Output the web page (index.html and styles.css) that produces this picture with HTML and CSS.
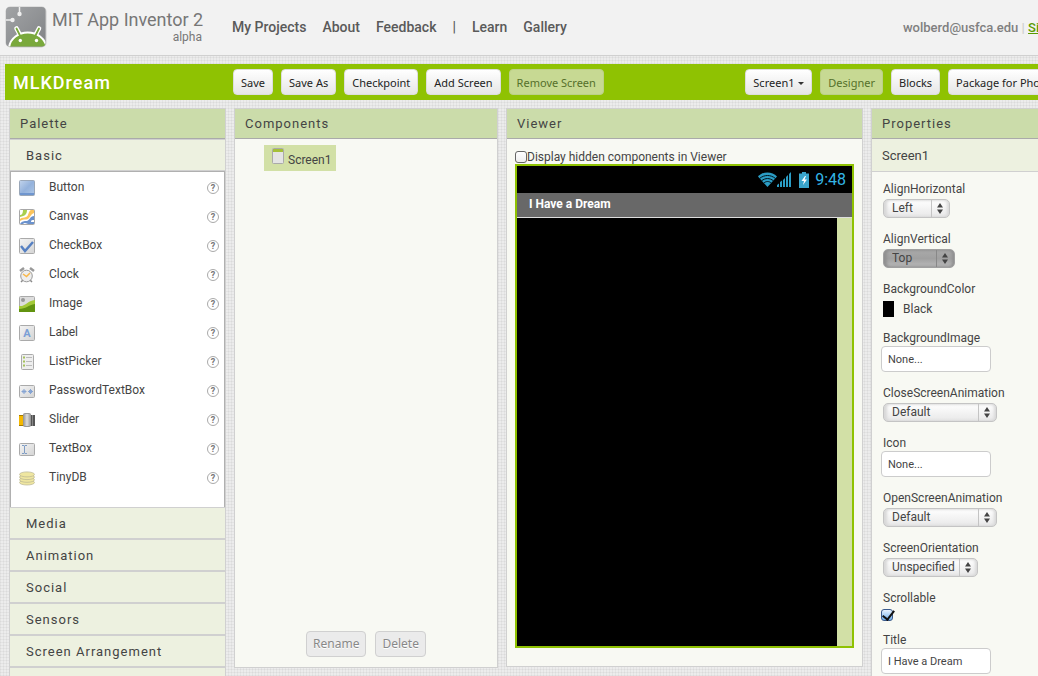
FILE: index.html
```html
<!DOCTYPE html>
<html lang="en">
<head>
    <meta charset="UTF-8">
    <meta name="viewport" content="width=device-width, initial-scale=1.0">
    <title>MIT App Inventor 2</title>
    <link rel="stylesheet" href="styles.css">
</head>
<body>
<div class="page">
    <header class="top-panel">
        <svg class="logo" viewBox="0 0 42 42" width="42" height="42">
            <defs>
                <linearGradient id="tile" x1="0" y1="0" x2="1" y2="1">
                    <stop offset="0" stop-color="#a2a4a6"/>
                    <stop offset="1" stop-color="#808285"/>
                </linearGradient>
                <clipPath id="tileClip"><rect x="1" y="1" width="39.500" height="39.500" rx="4"/></clipPath>
            </defs>
            <rect x="0.500" y="0.500" width="41" height="41" rx="5" fill="#c9c9c9"/>
            <g clip-path="url(#tileClip)">
                <rect x="0" y="0" width="42" height="42" fill="url(#tile)"/>
                <path d="M14.500 0V7M0 14H7" stroke="#eee" stroke-width="1.500"/>
                <circle cx="14.500" cy="8" r="2.200" fill="#eee"/>
                <circle cx="7.500" cy="14" r="2.200" fill="#eee"/>
                <path d="M11.500 22.500L15 29M34 22.500L30.500 29" stroke="#fff" stroke-width="4.600" stroke-linecap="round"/>
                <path d="M4 42C5 32 14 26.500 22.700 26.500C32 26.500 40 32 42 42Z" fill="#7aa93c" stroke="#fff" stroke-width="2"/>
                <path d="M11.500 22.500L15 29.500M34 22.500L30.500 29.500" stroke="#7aa93c" stroke-width="1.800" stroke-linecap="round"/>
                <circle cx="15.300" cy="34.500" r="1.700" fill="#fff"/>
                <circle cx="31.500" cy="34.500" r="1.700" fill="#fff"/>
            </g>
        </svg>
        <div class="brand">
            <div class="brand-name">MIT App Inventor 2</div>
            <div class="brand-tag">alpha</div>
        </div>
        <nav class="main-nav">
            <a href="#">My Projects</a>
            <a href="#">About</a>
            <a href="#">Feedback</a>
            <span>|</span>
            <a href="#">Learn</a>
            <a href="#">Gallery</a>
        </nav>
        <div class="account">wolberd@usfca.edu <span class="divider">|</span> <a href="#">Sign out</a></div>
    </header>

    <div class="toolbar">
        <h1>MLKDream</h1>
        <div class="button-group">
            <button>Save</button>
            <button>Save As</button>
            <button>Checkpoint</button>
            <button>Add Screen</button>
            <button disabled>Remove Screen</button>
        </div>
        <div class="button-group right">
            <button>Screen1 <span class="caret"></span></button>
            <button disabled>Designer</button>
            <button>Blocks</button>
            <button>Package for Phone</button>
        </div>
    </div>

    <main class="columns">
        <!-- Palette -->
        <section class="panel palette">
            <h2>Palette</h2>
            <h3>Basic</h3>
            <ul class="palette-items">
                <li>
                    <svg viewBox="0 0 16 16"><defs><linearGradient id="blue" x1="0" y1="0" x2="1" y2="1"><stop offset="0" stop-color="#c2d4ec"/><stop offset=".5" stop-color="#94b2dc"/><stop offset="1" stop-color="#afc8e8"/></linearGradient><linearGradient id="grey" x1="0" y1="0" x2="1" y2="1"><stop offset="0" stop-color="#f4f4f4"/><stop offset="1" stop-color="#d4d4d4"/></linearGradient></defs><rect x=".5" y=".5" width="15" height="15" rx="1" fill="url(#blue)" stroke="#9aa7b8"/><path d="M1 13h14v2H1z" fill="#6f96cf"/></svg>
                    <span>Button</span><a class="help" href="#">?</a>
                </li>
                <li>
                    <svg viewBox="0 0 16 16"><rect x=".5" y=".5" width="15" height="15" rx="1" fill="#fff" stroke="#a8a8a8"/><path d="M4 1h4c0 4-2 6-7 7V6c2 0 3-2 3-5z" fill="#a9cf4e"/><path d="M15 1h-3c-3 1-2 6-5 7-2 1-4 0-6 2v2c4-3 7 0 9-3 2-2 2-4 5-5z" fill="#fcc45c"/><path d="M15 7c-4 0-4 4-7 5-3 0-5 0-7 3h3c2-2 4 0 5 0h6v-2h-3c0-2 1-2 3-2z" fill="#6b92cd"/></svg>
                    <span>Canvas</span><a class="help" href="#">?</a>
                </li>
                <li>
                    <svg viewBox="0 0 16 16"><rect x=".5" y=".5" width="15" height="15" rx="1" fill="url(#grey)" stroke="#aaa"/><path d="M2 8l4 5 8-9" fill="none" stroke="#5680c2" stroke-width="2.500"/></svg>
                    <span>CheckBox</span><a class="help" href="#">?</a>
                </li>
                <li>
                    <svg viewBox="0 0 16 16"><path d="M1 4l4-3M11 1l4 3" stroke="#999" stroke-width="2.500"/><path d="M4 13l-2 2M11 13l2 2" stroke="#888" stroke-width="1.500"/><circle cx="7.500" cy="9" r="5.800" fill="#eee" stroke="#999"/><path d="M4 7l3.500 2.500L11 6" fill="none" stroke="#f9b749" stroke-width="1.500"/></svg>
                    <span>Clock</span><a class="help" href="#">?</a>
                </li>
                <li>
                    <svg viewBox="0 0 16 16"><rect x=".5" y=".5" width="15" height="15" rx="1" fill="#ddd" stroke="#aaa"/><circle cx="4" cy="4" r="2" fill="#999"/><path d="M0 10c6 1 8-5 16-6v12H0z" fill="#a4c938"/><path d="M0 13c7 0 9-4 16-5v8H0z" fill="#629310"/></svg>
                    <span>Image</span><a class="help" href="#">?</a>
                </li>
                <li>
                    <svg viewBox="0 0 16 16"><rect x=".5" y=".5" width="15" height="15" rx="1" fill="url(#grey)" stroke="#aaa"/><text class="letter-icon" x="8" y="12" text-anchor="middle">A</text></svg>
                    <span>Label</span><a class="help" href="#">?</a>
                </li>
                <li>
                    <svg viewBox="0 0 16 16"><rect x="2.500" y=".5" width="12" height="15" rx="1" fill="#eee" stroke="#aaa"/><path d="M4 3.500h2M4 7.500h2M4 11.500h2" stroke="#a4c15a" stroke-width="2"/><path d="M7 3.500h6M7 7.500h6M7 11.500h6" stroke="#bbb"/></svg>
                    <span>ListPicker</span><a class="help" href="#">?</a>
                </li>
                <li>
                    <svg viewBox="0 0 16 16"><rect x=".5" y="2.500" width="15" height="12" rx="1" fill="url(#grey)" stroke="#aaa"/><path d="M5 6v5M2.500 8.500h5M3.500 7l3 3M6.500 7l-3 3M11.500 6v5M9 8.500h5M10 7l3 3M13 7l-3 3" stroke="#86a4d3"/></svg>
                    <span>PasswordTextBox</span><a class="help" href="#">?</a>
                </li>
                <li>
                    <svg viewBox="0 0 16 16"><defs><linearGradient id="knob"><stop offset="0" stop-color="#999"/><stop offset=".5" stop-color="#ddd"/><stop offset="1" stop-color="#999"/></linearGradient></defs><path d="M0 3h5v11H0z" fill="#f5b800"/><path d="M0 3h5v1H0zM0 13h5v1H0z" fill="#a37a00"/><path d="M11 3h5v11h-5z" fill="#555"/><path d="M13 3h1v11h-1z" fill="#888"/><rect x="4.500" y="1.500" width="7" height="13" rx="1" fill="url(#knob)" stroke="#999"/></svg>
                    <span>Slider</span><a class="help" href="#">?</a>
                </li>
                <li>
                    <svg viewBox="0 0 16 16"><rect x=".5" y="2.500" width="15" height="12" rx="1" fill="url(#grey)" stroke="#aaa"/><path d="M3 4.500h2l.5.500.500-.5h2M5.500 5v7M3 12.500h2l.5-.5.500.500h2" fill="none" stroke="#7e9cc4"/></svg>
                    <span>TextBox</span><a class="help" href="#">?</a>
                </li>
                <li>
                    <svg viewBox="0 0 16 16"><g fill="#efe6a0" stroke="#b9b592" stroke-width=".7"><ellipse cx="8" cy="12.500" rx="7.500" ry="2.500"/><ellipse cx="8" cy="9.800" rx="7.500" ry="2.500"/><ellipse cx="8" cy="7.100" rx="7.500" ry="2.500"/><ellipse cx="8" cy="4.400" rx="7.500" ry="2.500"/></g></svg>
                    <span>TinyDB</span><a class="help" href="#">?</a>
                </li>
            </ul>
            <h3>Media</h3>
            <h3>Animation</h3>
            <h3>Social</h3>
            <h3>Sensors</h3>
            <h3>Screen Arrangement</h3>
            <div class="palette-end"></div>
        </section>

        <!-- Components tree -->
        <section class="panel components">
            <h2>Components</h2>
            <div class="tree">
                <a class="tree-item" href="#">
                    <svg viewBox="0 0 12 16" width="12" height="16"><rect x=".5" y=".5" width="11" height="15" rx="1" fill="#e4e4e4" stroke="#aaa"/><path d="M1 1h10v3H1z" fill="#a5c03a"/></svg>
                    <span>Screen1</span>
                </a>
            </div>
            <div class="tree-buttons">
                <button disabled>Rename</button>
                <button disabled>Delete</button>
            </div>
        </section>

        <!-- Viewer -->
        <section class="panel viewer">
            <h2>Viewer</h2>
            <div class="viewer-body">
                <label class="hidden-toggle"><input type="checkbox">Display hidden components in Viewer</label>
                <div class="phone">
                    <div class="status-bar">
                        <svg class="wifi" viewBox="0 0 19 15" width="19" height="15"><path d="M0 4.500C5-1 14-1 19 4.500L9.500 15z" fill="#2b9cc4"/><path d="M1.500 6.500c5-4 11-4 16 0M3.500 8.800c4-3 8-3 12 0M5.800 11c2.500-2 5-2 7.500 0" fill="none" stroke="#001018" stroke-width="1"/></svg>
                        <svg viewBox="0 0 15 15" width="15" height="15"><path d="M0 15v-2l2-1.500V15zM3 15v-5l2-1.500V15zM6 15V8l2-2v9zM9 15V5l2-2v12zM12 15V2l2-2v15z" fill="#2b9cc4"/></svg>
                        <svg class="battery" viewBox="0 0 10 16" width="10" height="16"><path d="M3 0h4v1.500h3V16H0V1.500h3z" fill="#3aa5cc"/><path d="M6 4L2.500 9H5l-1 4 4-5.500H5.500L7 4z" fill="#fff"/></svg>
                        <span>9:48</span>
                    </div>
                    <div class="title-bar">I Have a Dream</div>
                    <div class="screen"></div>
                </div>
            </div>
        </section>

        <!-- Properties -->
        <section class="panel properties">
            <h2>Properties</h2>
            <div class="subject">Screen1</div>
            <form class="props">
                <div class="prop">
                    <label for="alignH">AlignHorizontal</label>
                    <div class="picker w-left"><select id="alignH"><option>Left</option></select><svg viewBox="0 0 6 11"><path d="M3 0l3 4.500H0zM3 11l3-4.500H0z" fill="#444"/></svg></div>
                </div>
                <div class="prop">
                    <label for="alignV">AlignVertical</label>
                    <div class="picker w-top dark"><select id="alignV"><option>Top</option></select><svg viewBox="0 0 6 11"><path d="M3 0l3 4.500H0zM3 11l3-4.500H0z" fill="#444"/></svg></div>
                </div>
                <div class="prop">
                    <span class="prop-name">BackgroundColor</span>
                    <div class="color"><span class="swatch"></span>Black</div>
                </div>
                <div class="prop">
                    <label for="bgImage">BackgroundImage</label>
                    <input class="field" id="bgImage" type="text" value="None...">
                </div>
                <div class="prop">
                    <label for="closeAnim">CloseScreenAnimation</label>
                    <div class="picker w-default"><select id="closeAnim"><option>Default</option></select><svg viewBox="0 0 6 11"><path d="M3 0l3 4.500H0zM3 11l3-4.500H0z" fill="#444"/></svg></div>
                </div>
                <div class="prop">
                    <label for="icon">Icon</label>
                    <input class="field" id="icon" type="text" value="None...">
                </div>
                <div class="prop">
                    <label for="openAnim">OpenScreenAnimation</label>
                    <div class="picker w-default"><select id="openAnim"><option>Default</option></select><svg viewBox="0 0 6 11"><path d="M3 0l3 4.500H0zM3 11l3-4.500H0z" fill="#444"/></svg></div>
                </div>
                <div class="prop">
                    <label for="orientation">ScreenOrientation</label>
                    <div class="picker w-orient"><select id="orientation"><option>Unspecified</option></select><svg viewBox="0 0 6 11"><path d="M3 0l3 4.500H0zM3 11l3-4.500H0z" fill="#444"/></svg></div>
                </div>
                <div class="prop check">
                    <label for="scrollable">Scrollable</label>
                    <input id="scrollable" type="checkbox" checked>
                </div>
                <div class="prop">
                    <label for="title">Title</label>
                    <input class="field" id="title" type="text" value="I Have a Dream">
                </div>
            </form>
        </section>
    </main>
</div>
</body>
</html>
```
FILE: styles.css
```css
* {
    box-sizing: border-box;
}
body {
    margin: 0;
    overflow: hidden;
    font-family: Roboto, Arial, sans-serif;
    font-size: 12px;
    color: #444;
    /* woven grey backdrop */
    background-color: #ececec;
    background-image:
        repeating-linear-gradient(0deg, rgba(0, 0, 0, 0.04) 0 1px, transparent 1px 3px),
        repeating-linear-gradient(90deg, rgba(0, 0, 0, 0.04) 0 1px, transparent 1px 3px);
}
.page {
    min-width: 1088px; /* the designer never gets narrower than this */
    height: 100vh;
}
h1, h2, h3 {
    margin: 0;
    font-weight: 400;
}
a {
    color: inherit;
    text-decoration: none;
}
button, input, select {
    font-family: inherit;
    color: inherit;
}

/* Top panel */
.top-panel {
    display: flex;
    align-items: center;
    height: 56px;
    padding: 0 12px 1px 5px;
    background-color: #f2f2f2;
    border-bottom: 1px solid #d0d0d0;
}
.logo {
    flex: none;
    margin-right: 5px;
}
.brand {
    width: 150px;
    margin-right: 30px;
    color: #777;
    white-space: nowrap;
    text-align: right;
}
.brand-name {
    font-size: 18px;
    line-height: 20px;
}
.brand-tag {
    font-size: 12px;
    line-height: 14px;
}
.main-nav {
    display: flex;
    gap: 16px;
    font-size: 14px;
    font-weight: 500;
    color: #5a5a5a;
    white-space: nowrap;
}
.account {
    margin-left: auto;
    font-size: 13px;
    font-weight: 500;
    color: #808080;
    white-space: nowrap;
}
.account .divider {
    color: #ccc;
}
.account a {
    color: #5a9a00;
    text-decoration: underline;
}

/* Project toolbar */
.toolbar {
    display: flex;
    align-items: center;
    height: 36px;
    margin: 8px 0 8px 5px;
    padding: 0 27px 0 8px;
    background-color: #8fc202;
}
.toolbar h1 {
    width: 220px;
    font-size: 18px;
    font-weight: 500;
    letter-spacing: 1px;
    color: #fff;
}
.button-group {
    display: flex;
    gap: 8px;
}
.button-group.right {
    margin-left: auto;
}
button {
    height: 26px;
    padding: 0 7px;
    font-family: "Noto Sans", sans-serif;
    font-size: 11px;
    color: #222;
    white-space: nowrap;
    background: linear-gradient(#fff, #e6e6e6);
    border: 1px solid #ddd;
    border-radius: 4px;
}
.toolbar button:disabled {
    color: #55702a;
    background: #c7d993;
    border-color: #bcd088;
}
.caret {
    display: inline-block;
    margin-left: 1px;
    vertical-align: middle;
    border: 3px solid transparent;
    border-top-color: #333;
    border-bottom: 0;
}

/* Columns */
.columns {
    display: grid;
    grid-template-columns: 217px 264px 357px 1fr;
    align-items: start;
    gap: 8px;
    padding-left: 9px;
}
.panel {
    background-color: #f8f9f3;
    border: 1px solid #d0d0d0;
}
.panel h2 {
    height: 30px;
    padding-left: 10px;
    font-size: 13px;
    line-height: 29px;
    letter-spacing: 1px;
    background-color: #cbdcaa;
    border-bottom: 1px solid #aaa;
}

/* Palette */
.palette h3 {
    height: 32px;
    padding-left: 16px;
    font-size: 13px;
    line-height: 31px;
    letter-spacing: 1px;
    background-color: #edf1e0;
    border-top: 1px solid #d0d0d0;
    border-bottom: 1px solid #d0d0d0;
}
.palette-items {
    height: 336px;
    margin: 0;
    padding: 0 5px 0 8px;
    list-style: none;
    background-color: #fff;
    border: 1px solid #b0b0b0;
    border-bottom: 0;
}
.palette-items li {
    display: flex;
    align-items: center;
    height: 29px;
}
.palette-items svg {
    width: 16px;
    height: 16px;
    margin: 2px 14px 0 0;
}
.palette-items span {
    flex: 1;
}
.letter-icon {
    font-size: 11px;
    font-weight: bold;
    fill: #7b9fd6;
}
.help {
    width: 12px;
    height: 12px;
    margin-top: 2px;
    border: 1px solid #aaa;
    border-radius: 50%;
    font-size: 9px;
    font-weight: bold;
    line-height: 10px;
    text-align: center;
    color: #777;
}
.palette-end {
    height: 32px;
    background-color: #edf1e0;
    border-top: 1px solid #d0d0d0;
}

/* Components */
.components {
    display: flex;
    flex-direction: column;
    height: 560px;
}
.tree {
    flex: 1;
    padding: 6px 0 0 29px;
}
.tree-item {
    display: inline-flex;
    gap: 4px;
    height: 26px;
    padding: 3px 5px 0 8px;
    background-color: #d2e0a6;
}
.tree-item span {
    padding-top: 5px;
}
.tree-buttons {
    display: flex;
    justify-content: center;
    gap: 9px;
    padding-bottom: 10px;
}
.tree-buttons button {
    padding: 0 6px;
    font-size: 12px;
    line-height: 22px;
    color: #888;
    background: #ebebeb;
    border-color: #d0d0d0;
    text-shadow: 0 1px 0 #fff;
}

/* Viewer */
.viewer-body {
    padding: 9px 8px 18px;
}
.hidden-toggle {
    display: flex;
    align-items: center;
    height: 16px;
    padding-top: 2px;
}
input[type="checkbox"] {
    appearance: none;
    width: 12px;
    height: 12px;
    margin: 0;
    background: linear-gradient(#fff, #eee);
    border: 1px solid #666;
    border-radius: 3px;
}
.phone {
    border: 2px solid #8fc202;
    background-color: #d2e0a6;
}
.status-bar {
    display: flex;
    align-items: center;
    justify-content: flex-end;
    height: 27px;
    padding-right: 6px;
    font-size: 16px;
    color: #33b5e5;
    background-color: #000;
}
.battery {
    margin: 0 6px 0 7px;
}
.title-bar {
    height: 25px;
    padding-left: 12px;
    font-weight: bold;
    line-height: 22px;
    color: #fff;
    background-color: #686868;
    border-bottom: 1px solid #ddd;
}
.screen {
    height: 428px;
    margin-right: 15px;
    background-color: #000;
}

/* Properties */
.subject {
    height: 33px;
    padding-left: 10px;
    font-size: 13px;
    line-height: 33px;
    background-color: #edf1e0;
    border-bottom: 1px solid #d0d0d0;
}
.props {
    padding: 9px 9px 0;
}
.prop {
    display: flex;
    flex-direction: column;
    align-items: flex-start;
    margin-bottom: 13px;
}
.prop label, .prop-name {
    height: 16px;
    margin-left: 2px;
    line-height: 17px;
}
.picker {
    position: relative;
    margin: 2px 0 0 2px;
}
.picker select {
    appearance: none;
    display: block;
    width: 100%;
    height: 19px;
    padding: 0 20px 1px 8px;
    font-size: 12px;
    background: linear-gradient(#fff, #e8e8e8);
    border: 1px solid #c4c4c4;
    border-radius: 5px;
    box-shadow: inset 3px 0 3px #d8d8d8, inset -2px 0 3px #d8d8d8;
}
.picker.dark select {
    background: linear-gradient(#aaa, #a0a0a0 50%, #bbb);
    border-color: #a0a0a0;
    box-shadow: inset 3px 0 3px #909090, inset -2px 0 3px #909090;
}
.picker::after {
    content: "";
    position: absolute;
    top: 1px;
    bottom: 1px;
    right: 18px;
    border-left: 1px solid #c4c4c4;
}
.picker.dark::after {
    border-color: #888;
}
.picker svg {
    position: absolute;
    top: 4px;
    right: 7px;
    width: 6px;
    height: 11px;
    pointer-events: none;
}
.w-left { width: 67px; }
.w-top { width: 72px; }
.w-default { width: 114px; }
.w-orient { width: 95px; }
.color {
    display: flex;
    align-items: center;
    gap: 9px;
    height: 16px;
    margin: 4px 0 0 2px;
}
.swatch {
    width: 11px;
    height: 16px;
    background-color: #000;
}
.field {
    width: 110px;
    height: 26px;
    padding: 0 6px;
    font-size: 11px;
    background-color: #fff;
    border: 1px solid #ccc;
    border-radius: 4px;
}
.prop.check {
    margin-bottom: 11px;
}
.prop.check input {
    margin-top: 3px;
    background: linear-gradient(#e8f3ff, #6fb0ee);
    border-color: #3a5a8c;
}
.prop.check input::before {
    content: "";
    display: block;
    width: 5px;
    height: 10px;
    margin: -2px 0 0 3px;
    border: solid #111;
    border-width: 0 2px 2px 0;
    transform: rotate(38deg);
}
```
